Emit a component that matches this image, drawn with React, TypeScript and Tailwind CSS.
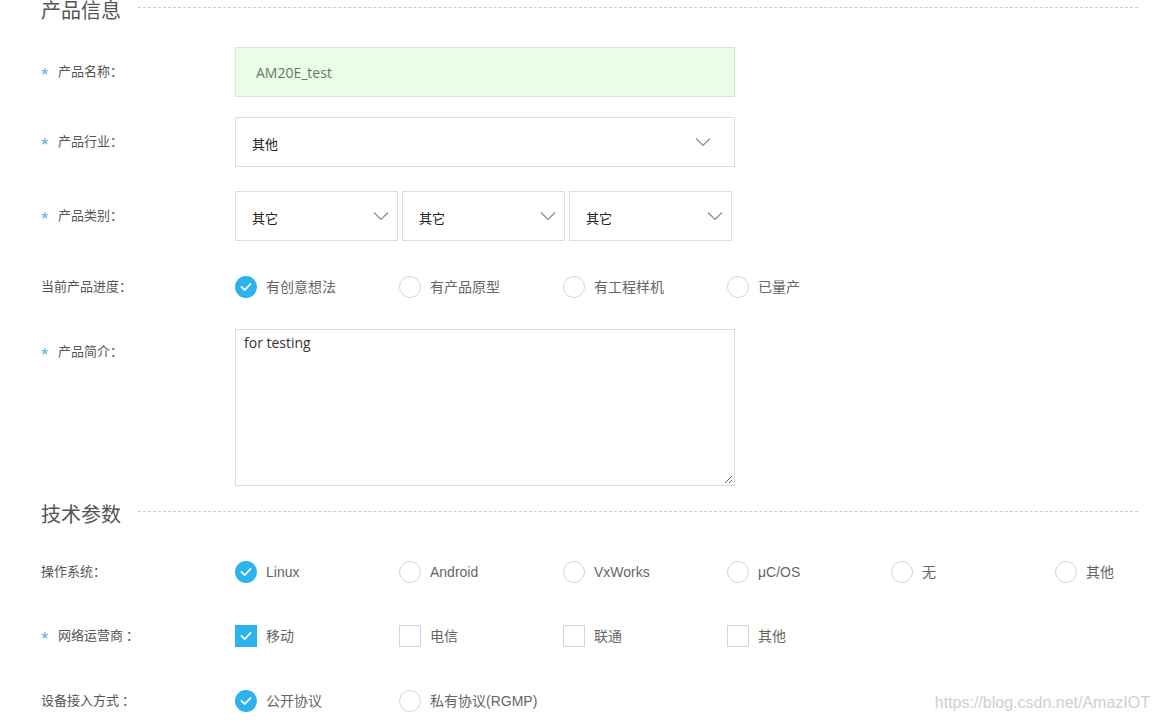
import React from 'react';

const cjk = '"Noto Sans CJK SC", "Noto Sans", sans-serif';
const latin = '"Liberation Sans", "Noto Sans CJK SC", sans-serif';

function Chevron() {
    return (
        <svg width="16" height="10" viewBox="0 0 16 10" fill="none">
            <path d="M1 1.5 L8 8.5 L15 1.5" stroke="#8a8a8a" strokeWidth="1.1" />
        </svg>
    );
}

function Check() {
    return (
        <svg width="12" height="10" viewBox="0 0 12 10" fill="none">
            <path d="M1.5 5 L4.8 8 L10.5 2" stroke="#fff" strokeWidth="1.8" strokeLinecap="round" strokeLinejoin="round" />
        </svg>
    );
}

function Label({ text, required }: { text: string; required?: boolean }) {
    return (
        <div className="w-[194px] shrink-0 flex items-center text-[13px] text-[#555] -mt-[3px]" style={{ fontFamily: cjk }}>
            <span className={'w-[17px] text-[#5ab4d8] text-[19px] leading-none translate-y-[4px] ' + (required ? '' : 'hidden')} style={{ fontFamily: latin }}>*</span>
            <span>{text}</span>
        </div>
    );
}

function SectionTitle({ text }: { text: string }) {
    return (
        <div className="flex items-center pr-[21px]">
            <span className="text-[20px] leading-[22px] text-[#555] w-[97px]" style={{ fontFamily: cjk }}>{text}</span>
            <div className="flex-1 border-t border-dashed border-[#ccc] -mt-[6px]"></div>
        </div>
    );
}

function Option({ text, checked, square }: { text: string; checked?: boolean; square?: boolean }) {
    const shape = square ? '' : 'rounded-full';
    return (
        <div className="w-[164px] shrink-0 flex items-center gap-[9px]">
            {checked ? (
                <div className={'w-[22px] h-[22px] bg-[#2db3ec] flex items-center justify-center ' + shape}>
                    <Check />
                </div>
            ) : (
                <div className={'w-[22px] h-[22px] border border-[#d6d6d6] bg-white ' + shape}></div>
            )}
            <span className="text-[14px] text-[#666]" style={{ fontFamily: latin }}>{text}</span>
        </div>
    );
}

function Select({ value, width, pr }: { value: string; width: string; pr: string }) {
    return (
        <div className={'h-[50px] border border-[#ddd] bg-white flex items-center justify-between pl-[16px] ' + width + ' ' + pr}>
            <span className="text-[13px] text-[#222] mt-[4px]" style={{ fontFamily: cjk }}>{value}</span>
            <Chevron />
        </div>
    );
}

export default function App() {
    const progress = ['有创意想法', '有产品原型', '有工程样机', '已量产'];
    const os = ['Linux', 'Android', 'VxWorks', 'μC/OS', '无', '其他'];
    const network = ['移动', '电信', '联通', '其他'];

    return (
        <div className="w-[1159px] h-[723px] bg-white relative overflow-hidden pl-[41px]">
            <div className="-mt-[1px]">
                <SectionTitle text="产品信息" />
            </div>

            <div className="flex items-center mt-[26px]">
                <Label text="产品名称：" required />
                <div className="w-[500px] h-[50px] border border-[#d8e6d6] bg-[#eafde6] flex items-center pl-[20px]">
                    <span className="text-[14px] text-[#5f7d5c]" style={{ fontFamily: '"Open Sans", sans-serif' }}>AM20E_test</span>
                </div>
            </div>

            <div className="flex items-center mt-[20px]">
                <Label text="产品行业：" required />
                <Select value="其他" width="w-[500px]" pr="pr-[23px]" />
            </div>

            <div className="flex items-center mt-[24px]">
                <Label text="产品类别：" required />
                <div className="flex gap-[4px]">
                    <Select value="其它" width="w-[163px]" pr="pr-[8px]" />
                    <Select value="其它" width="w-[163px]" pr="pr-[8px]" />
                    <Select value="其它" width="w-[163px]" pr="pr-[8px]" />
                </div>
            </div>

            <div className="flex items-center mt-[35px] h-[22px]">
                <Label text="当前产品进度：" />
                <div className="flex">
                    {progress.map((p, i) => (
                        <Option key={p} text={p} checked={i === 0} />
                    ))}
                </div>
            </div>

            <div className="flex items-start mt-[31px]">
                <div className="pt-[15px]">
                    <Label text="产品简介：" required />
                </div>
                <div className="w-[500px] h-[157px] border border-[#ddd] bg-white pl-[8px] relative">
                    <span className="text-[14px] text-[#333]" style={{ fontFamily: '"Open Sans", sans-serif' }}>for testing</span>
                    <svg className="absolute right-[1px] bottom-[1px]" width="9" height="9" viewBox="0 0 9 9">
                        <path d="M8 1 L1 8 M8 5 L5 8" stroke="#666" strokeWidth="1" />
                    </svg>
                </div>
            </div>

            <div className="mt-[17px]">
                <SectionTitle text="技术参数" />
            </div>

            <div className="flex items-center mt-[36px] h-[22px]">
                <Label text="操作系统：" />
                <div className="flex">
                    {os.map((o, i) => (
                        <Option key={o} text={o} checked={i === 0} />
                    ))}
                </div>
            </div>

            <div className="flex items-center mt-[42px] h-[22px]">
                <Label text="网络运营商 ：" required />
                <div className="flex">
                    {network.map((n, i) => (
                        <Option key={n} text={n} checked={i === 0} square />
                    ))}
                </div>
            </div>

            <div className="flex items-center mt-[43px] h-[22px]">
                <Label text="设备接入方式 ：" />
                <div className="flex">
                    <Option text="公开协议" checked />
                    <Option text="私有协议(RGMP)" />
                </div>
            </div>

            <div className="absolute right-[9px] bottom-[8px] text-[16px] text-[#cfcfcf]" style={{ fontFamily: latin }}>
                https://blog.csdn.net/AmazIOT
            </div>
        </div>
    );
}
